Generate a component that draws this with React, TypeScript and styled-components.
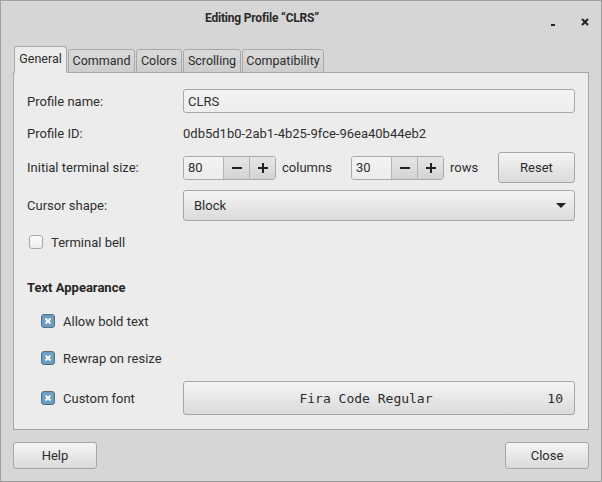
import React from "react";
import styled, { createGlobalStyle } from "styled-components";

const Global = createGlobalStyle`
  html, body { margin: 0; padding: 0; background: #d6d6d6; }
  * { box-sizing: border-box; }
  body { font-family: Roboto, "Liberation Sans", sans-serif; font-size: 13px; color: #2f2f2f; }
`;

const Window = styled.div`
  width: 602px;
  height: 482px;
  border: 1px solid #a0a0a0;
  background: #d6d6d6;
  display: flex;
  flex-direction: column;
`;

const TitleBar = styled.div`
  height: 39px;
  display: flex;
  align-items: center;
  padding-bottom: 5px;
`;

const Title = styled.div`
  flex: 1;
  text-align: center;
  font-family: Roboto, sans-serif;
  font-weight: 700;
  font-size: 12px;
  letter-spacing: -0.2px;
  color: #2a2a2a;
  padding-left: 1px;
`;

const TitleButtons = styled.div`
  display: flex;
  justify-content: flex-end;
  align-items: center;
  gap: 23px;
  padding-right: 12px;
  padding-left: 28px;
`;

const TitleBtn = styled.span`
  display: block;
  width: 8px;
  height: 8px;
`;

const Body = styled.div`
  flex: 1;
  display: flex;
  flex-direction: column;
  padding: 6px 12px 0 12px;
`;

const TabBar = styled.div`
  display: flex;
  align-items: flex-end;
  padding-left: 1px;
  gap: 1px;
  height: 27px;
  position: relative;
  z-index: 1;
  margin-bottom: -1px;
`;

const Tab = styled.div<{ $active?: boolean; $w: number }>`
  flex: none;
  width: ${(p) => p.$w}px;
  height: ${(p) => (p.$active ? "27px" : "24px")};
  display: flex;
  align-items: center;
  justify-content: center;
  padding-bottom: ${(p) => (p.$active ? "3px" : "1px")};
  border: 1px solid #a9a9a9;
  border-bottom: ${(p) => (p.$active ? "1px solid #ececec" : "1px solid #a9a9a9")};
  border-radius: 3px 3px 0 0;
  background: ${(p) => (p.$active ? "#ececec" : "linear-gradient(#dadada, #cdcdcd)")};
  color: #2c2c2c;
  font-size: 12.5px;
  white-space: nowrap;
  overflow: hidden;
`;

const Panel = styled.div`
  height: 358px;
  border: 1px solid #a6a6a6;
  background: #ececec;
  padding: 16px 13px 0 13px;
  display: flex;
  flex-direction: column;
`;

const Row = styled.div<{ $h: number; $mt?: number }>`
  height: ${(p) => p.$h}px;
  margin-top: ${(p) => p.$mt ?? 0}px;
  display: flex;
  align-items: center;
`;

const Label = styled.div`
  width: 156px;
  flex: none;
`;

const Heading = styled.div`
  font-weight: 700;
  color: #262626;
`;

const TextInput = styled.div`
  flex: 1;
  height: 24px;
  border: 1px solid #a9a9a9;
  border-radius: 3px;
  background: linear-gradient(#f3f3f3, #eeeeee);
  display: flex;
  align-items: center;
  padding-left: 4px;
`;

const Spin = styled.div`
  display: flex;
  height: 24px;
  border: 1px solid #a9a9a9;
  border-radius: 3px;
  overflow: hidden;
`;

const SpinField = styled.div`
  width: 39px;
  background: linear-gradient(#f3f3f3, #ececec);
  display: flex;
  align-items: center;
  padding-left: 4px;
`;

const SpinBtn = styled.div`
  width: 26px;
  border-left: 1px solid #b3b3b3;
  background: linear-gradient(#e6e6e6, #d3d3d3);
  display: flex;
  align-items: center;
  justify-content: center;
`;

const Unit = styled.div<{ $w: number }>`
  width: ${(p) => p.$w}px;
  padding-left: 6px;
`;

const Button = styled.div<{ $w?: number; $h: number }>`
  width: ${(p) => (p.$w ? `${p.$w}px` : "auto")};
  height: ${(p) => p.$h}px;
  border: 1px solid #a6a6a6;
  border-radius: 3px;
  background: linear-gradient(#f5f5f5, #dadada);
  display: flex;
  align-items: center;
  justify-content: center;
  color: #2c2c2c;
`;

const Combo = styled(Button)`
  flex: 1;
  justify-content: space-between;
  padding: 0 8px 0 10px;
`;

const FontButton = styled(Button)`
  flex: 1;
  position: relative;
  font-family: "DejaVu Sans Mono", "Liberation Mono", monospace;
  font-size: 13px;
  padding-right: 26px;
`;

const FontSize = styled.span`
  position: absolute;
  right: 11px;
`;

const Check = styled.div<{ $checked?: boolean }>`
  width: 14px;
  height: 14px;
  flex: none;
  border-radius: 3px;
  border: 1px solid ${(p) => (p.$checked ? "#4f6f86" : "#a8a8a8")};
  background: ${(p) => (p.$checked ? "#6c9ec0" : "linear-gradient(#fbfbfb, #ececec)")};
  display: flex;
  align-items: center;
  justify-content: center;
`;

const CheckRow = styled.div<{ $indent: number }>`
  display: flex;
  align-items: center;
  gap: 8px;
  padding-left: ${(p) => p.$indent}px;
  width: 156px;
  flex: none;
`;

const Spacer = styled.div`
  flex: 1;
`;

const Footer = styled.div`
  display: flex;
  justify-content: space-between;
  padding-top: 12px;
`;

const Minus = () => (
  <svg width="12" height="12" viewBox="0 0 12 12">
    <rect x="1" y="5" width="10" height="2" fill="#222" />
  </svg>
);
const Plus = () => (
  <svg width="12" height="12" viewBox="0 0 12 12">
    <rect x="1" y="5" width="10" height="2" fill="#222" />
    <rect x="5" y="1" width="2" height="10" fill="#222" />
  </svg>
);
const XMark = () => (
  <svg width="8" height="8" viewBox="0 0 8 8">
    <path d="M1.5 1.5 L6.5 6.5 M6.5 1.5 L1.5 6.5" stroke="#fff" strokeWidth="1.8" />
  </svg>
);

const Field = ({ label, children }: { label: string; children: React.ReactNode }) => (
  <>
    <Label>{label}</Label>
    {children}
  </>
);

const SpinBox = ({ value }: { value: string }) => (
  <Spin>
    <SpinField>{value}</SpinField>
    <SpinBtn><Minus /></SpinBtn>
    <SpinBtn><Plus /></SpinBtn>
  </Spin>
);

const CheckItem = ({ label, checked, indent }: { label: string; checked?: boolean; indent: number }) => (
  <CheckRow $indent={indent}>
    <Check $checked={checked}>{checked && <XMark />}</Check>
    <span>{label}</span>
  </CheckRow>
);

const tabs: { name: string; w: number }[] = [
  { name: "General", w: 53 },
  { name: "Command", w: 67 },
  { name: "Colors", w: 46 },
  { name: "Scrolling", w: 58 },
  { name: "Compatibility", w: 82 },
];

export default function App() {
  return (
    <>
      <Global />
      <Window>
        <TitleBar>
          <Title>Editing Profile “CLRS”</Title>
          <TitleButtons>
            <TitleBtn>
              <svg width="8" height="8" viewBox="0 0 8 8">
                <rect x="1" y="6" width="4" height="2" fill="#222" />
              </svg>
            </TitleBtn>
            <TitleBtn>
              <svg width="8" height="8" viewBox="0 0 8 8">
                <path d="M1 1 L7 7 M7 1 L1 7" stroke="#222" strokeWidth="2" />
              </svg>
            </TitleBtn>
          </TitleButtons>
        </TitleBar>
        <Body>
          <TabBar>
            {tabs.map((t, i) => (
              <Tab key={t.name} $w={t.w} $active={i === 0}>
                {t.name}
              </Tab>
            ))}
          </TabBar>
          <Panel>
            <Row $h={24}>
              <Field label="Profile name:">
                <TextInput>CLRS</TextInput>
              </Field>
            </Row>
            <Row $h={24} $mt={8}>
              <Field label="Profile ID:">
                <div>0db5d1b0-2ab1-4b25-9fce-96ea40b44eb2</div>
              </Field>
            </Row>
            <Row $h={31} $mt={7}>
              <Field label="Initial terminal size:">
                <SpinBox value="80" />
                <Unit $w={75}>columns</Unit>
                <SpinBox value="30" />
                <Unit $w={49}>rows</Unit>
                <Spacer />
                <Button $w={77} $h={31}>Reset</Button>
              </Field>
            </Row>
            <Row $h={31} $mt={7}>
              <Field label="Cursor shape:">
                <Combo $h={31}>
                  <span>Block</span>
                  <svg width="10" height="6" viewBox="0 0 10 6">
                    <path d="M0 0 L10 0 L5 5 Z" fill="#222" />
                  </svg>
                </Combo>
              </Field>
            </Row>
            <Row $h={24} $mt={9}>
              <CheckItem indent={2} label="Terminal bell" />
            </Row>
            <Row $h={22} $mt={22}>
              <Heading>Text Appearance</Heading>
            </Row>
            <Row $h={24} $mt={11}>
              <CheckItem indent={14} checked label="Allow bold text" />
            </Row>
            <Row $h={24} $mt={13}>
              <CheckItem indent={14} checked label="Rewrap on resize" />
            </Row>
            <Row $h={34} $mt={11}>
              <CheckItem indent={14} checked label="Custom font" />
              <FontButton $h={34}>
                <span>Fira Code Regular</span>
                <FontSize>10</FontSize>
              </FontButton>
            </Row>
          </Panel>
          <Footer>
            <Button $w={84} $h={27}>Help</Button>
            <Button $w={84} $h={27}>Close</Button>
          </Footer>
        </Body>
      </Window>
    </>
  );
}
